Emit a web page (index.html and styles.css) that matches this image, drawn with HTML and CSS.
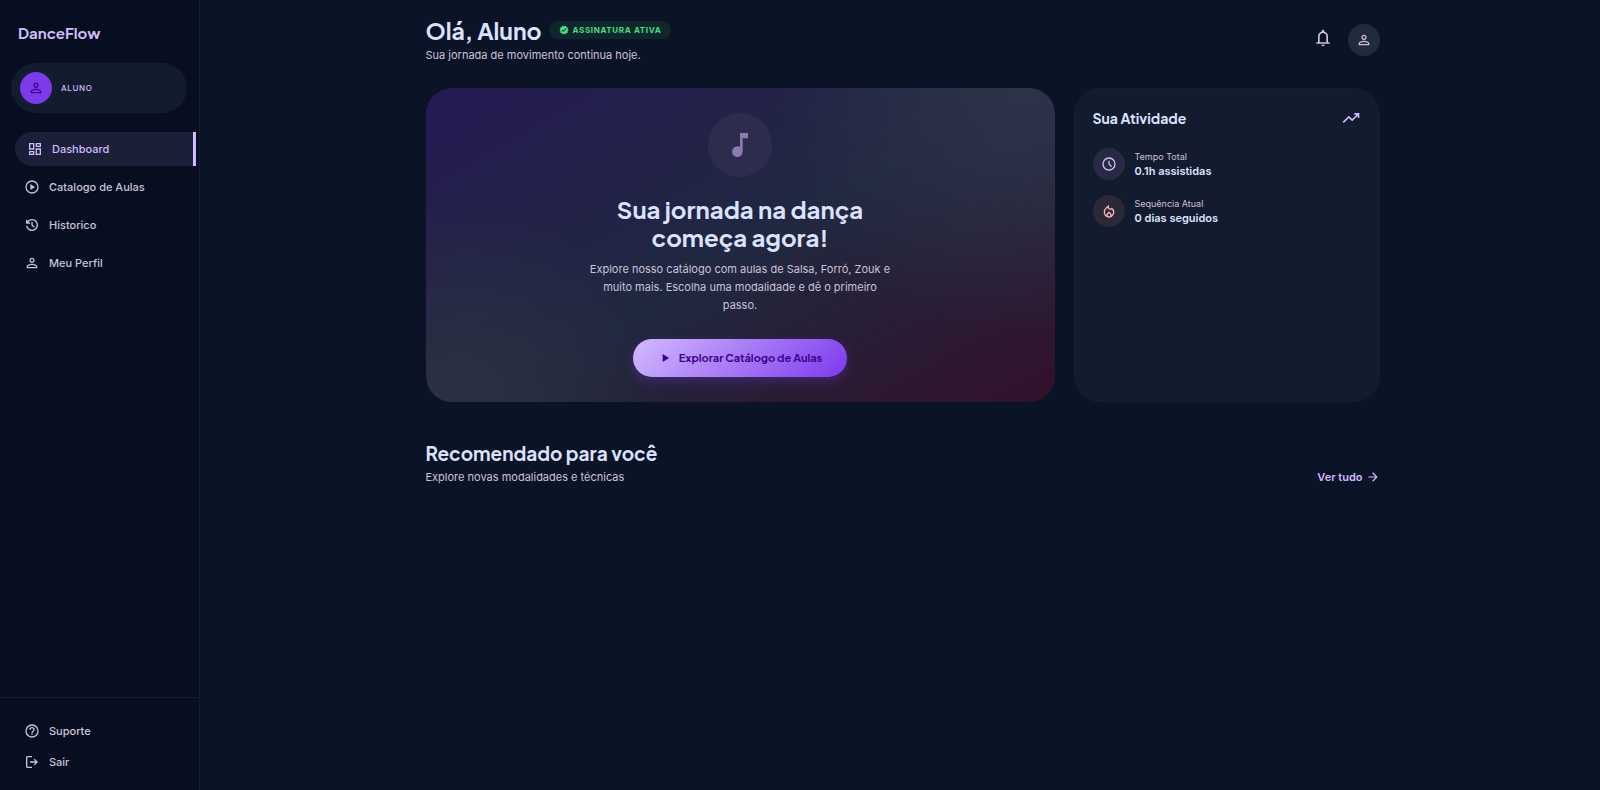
FILE: index.html
```html
<!DOCTYPE html>
<html lang="pt-BR">
<head>
  <meta charset="UTF-8">
  <meta name="viewport" content="width=device-width, initial-scale=1.0">
  <title>DanceFlow - Dashboard</title>
  <link rel="stylesheet" href="styles.css">
</head>
<body>
  <!-- Icons -->
  <svg class="sprite" aria-hidden="true">
    <symbol id="i-person" viewBox="0 0 24 24"><path d="M12 6a2 2 0 1 1 0 4 2 2 0 0 1 0-4m0 9c2.7 0 5.8 1.29 6 2v1H6v-.99c.2-.72 3.3-2.01 6-2.01M12 4C9.79 4 8 5.79 8 8s1.79 4 4 4 4-1.79 4-4-1.79-4-4-4m0 9c-2.67 0-8 1.34-8 4v3h16v-3c0-2.66-5.33-4-8-4"/></symbol>
    <symbol id="i-dashboard" viewBox="0 0 24 24"><path d="M19 5v2h-4V5h4M9 5v6H5V5h4m10 8v6h-4v-6h4M9 17v2H5v-2h4M21 3h-8v6h8V3M11 3H3v10h8V3m10 8h-8v10h8V11m-10 4H3v6h8v-6"/></symbol>
    <symbol id="i-play-circle" viewBox="0 0 24 24"><path d="M12 2a10 10 0 1 0 0 20 10 10 0 0 0 0-20m0 18a8 8 0 1 1 0-16 8 8 0 0 1 0 16M9.5 16.5l7-4.500-7-4.500z"/></symbol>
    <symbol id="i-history" viewBox="0 0 24 24"><path d="M12 21q-3.450 0-6.010-2.290T3.050 13H5.100q.350 2.600 2.310 4.300T12 19q2.930 0 4.960-2.040T19 12t-2.040-4.960T12 5q-1.730 0-3.230.800T6.250 8H9v2H3V4h2v2.350q1.280-1.600 3.110-2.470T12 3q1.880 0 3.510.710t2.850 1.930 1.930 2.850T21 12t-.710 3.510-1.930 2.850-2.850 1.930T12 21m2.800-4.800L11 12.400V7h2v4.600l3.200 3.200z"/></symbol>
    <symbol id="i-help" viewBox="0 0 24 24"><path d="M11 18h2v-2h-2zm1-16a10 10 0 1 0 0 20 10 10 0 0 0 0-20m0 18a8 8 0 1 1 0-16 8 8 0 0 1 0 16m0-14a4 4 0 0 0-4 4h2a2 2 0 1 1 4 0c0 2-3 1.750-3 5h2c0-2.250 3-2.500 3-5a4 4 0 0 0-4-4"/></symbol>
    <symbol id="i-logout" viewBox="0 0 24 24"><path d="M5 21q-.830 0-1.410-.590T3 19V5q0-.830.590-1.410T5 3h7v2H5v14h7v2zm11-4-1.380-1.450L17.180 13H9v-2h8.180l-2.550-2.550L16 7l5 5z"/></symbol>
    <symbol id="i-verified" viewBox="0 0 24 24"><path d="M23 12l-2.440-2.790.340-3.690-3.610-.820-1.890-3.200L12 2.960 8.600 1.500 6.710 4.690 3.100 5.500l.340 3.700L1 12l2.440 2.790-.340 3.700 3.610.820L8.600 22.500l3.400-1.470 3.400 1.460 1.890-3.190 3.610-.820-.340-3.690zm-12.910 4.720-3.800-3.810 1.480-1.480 2.320 2.330 5.850-5.870 1.480 1.480z"/></symbol>
    <symbol id="i-bell" viewBox="0 0 24 24"><path d="M4 19v-2h2v-7q0-2.080 1.250-3.690T10.500 4.200v-.700q0-.630.440-1.060T12 2t1.060.440.440 1.060v.700q2 .500 3.250 2.110T18 10v7h2v2zm8 3q-.820 0-1.410-.590T10 20h4q0 .830-.590 1.410T12 22m-4-5h8v-7q0-1.650-1.170-2.830T12 6 9.180 7.170 8 10z"/></symbol>
    <symbol id="i-note" viewBox="0 0 24 24"><path d="M10 21q-1.650 0-2.820-1.170T6 17t1.180-2.830T10 13q.580 0 1.060.140t.940.410V3h6v4h-4v10q0 1.650-1.170 2.830T10 21"/></symbol>
    <symbol id="i-play" viewBox="0 0 24 24"><path d="M8 5v14l11-7z"/></symbol>
    <symbol id="i-trend" viewBox="0 0 24 24"><path d="M3.400 18 2 16.600l7.400-7.450 4 4L18.600 8H16V6h6v6h-2V9.400L13.400 16l-4-4z"/></symbol>
    <symbol id="i-clock" viewBox="0 0 24 24"><path d="M15.300 16.700l1.400-1.400-3.700-3.700V7h-2v5.400zM12 22a10 10 0 1 1 0-20 10 10 0 0 1 0 20m0-2a8 8 0 1 0 0-16 8 8 0 0 0 0 16"/></symbol>
    <symbol id="i-fire" viewBox="0 -960 960 960"><path d="M240-400q0 52 21 98.500t60 81.500q-1-5-1-9v-9q0-32 12-60t35-51l113-111 113 111q23 23 35 51t12 60v9q0 4-1 9 39-35 60-81.500t21-98.500q0-50-18.500-94.500T648-574q-20 13-42 19.500t-45 6.500q-62 0-107.500-41T401-690q-39 33-69 68.500t-50.500 72Q261-513 250.500-475T240-400Zm240 52-57 56q-11 11-17 25t-6 29q0 32 23.500 55t56.500 23q33 0 56.500-23t23.500-55q0-16-6-29.500T537-292l-57-56Zm0-492v132q0 34 23.500 57t57.500 23q18 0 33.500-7.500T622-658l18-22q74 42 117 117t43 163q0 134-93 227T480-80q-134 0-227-93t-93-227q0-129 86.500-245T480-840Z"/></symbol>
    <symbol id="i-arrow" viewBox="0 0 24 24"><path d="M16.180 13H4v-2h12.180l-5.600-5.600L12 4l8 8-8 8-1.420-1.400z"/></symbol>
  </svg>

  <aside class="sidebar">
    <div class="logo">DanceFlow</div>

    <div class="profile">
      <div class="profile-avatar"><svg class="icon"><use href="#i-person"/></svg></div>
      <span class="profile-role">Aluno</span>
    </div>

    <nav class="nav">
      <a href="#" class="nav-link active"><svg class="icon"><use href="#i-dashboard"/></svg>Dashboard</a>
      <a href="#" class="nav-link"><svg class="icon"><use href="#i-play-circle"/></svg>Catalogo de Aulas</a>
      <a href="#" class="nav-link"><svg class="icon"><use href="#i-history"/></svg>Historico</a>
      <a href="#" class="nav-link"><svg class="icon"><use href="#i-person"/></svg>Meu Perfil</a>
    </nav>

    <div class="sidebar-footer">
      <a href="#" class="footer-link"><svg class="icon"><use href="#i-help"/></svg>Suporte</a>
      <a href="#" class="footer-link"><svg class="icon"><use href="#i-logout"/></svg>Sair</a>
    </div>
  </aside>

  <main class="main">
    <header class="header">
      <div>
        <div class="title-row">
          <h1>Olá, Aluno</h1>
          <span class="badge"><svg class="icon"><use href="#i-verified"/></svg>Assinatura ativa</span>
        </div>
        <p class="subtitle">Sua jornada de movimento continua hoje.</p>
      </div>
      <div class="header-actions">
        <button type="button" class="bell" aria-label="Notificações"><svg class="icon icon-lg"><use href="#i-bell"/></svg></button>
        <button type="button" class="avatar" aria-label="Meu perfil"><svg class="icon"><use href="#i-person"/></svg></button>
      </div>
    </header>

    <div class="grid">
      <section class="hero">
        <div class="hero-icon"><svg class="icon"><use href="#i-note"/></svg></div>
        <h2>Sua jornada na dança começa agora!</h2>
        <p>Explore nosso catálogo com aulas de Salsa, Forró, Zouk e muito mais. Escolha uma modalidade e dê o primeiro passo.</p>
        <button type="button" class="btn-primary"><svg class="icon"><use href="#i-play"/></svg>Explorar Catálogo de Aulas</button>
      </section>

      <section class="activity">
        <div class="activity-head">
          <h3>Sua Atividade</h3>
          <svg class="icon icon-lg"><use href="#i-trend"/></svg>
        </div>
        <div class="stat">
          <div class="stat-icon"><svg class="icon"><use href="#i-clock"/></svg></div>
          <div>
            <p class="stat-label">Tempo Total</p>
            <p class="stat-value">0.1h assistidas</p>
          </div>
        </div>
        <div class="stat">
          <div class="stat-icon stat-icon-fire"><svg class="icon"><use href="#i-fire"/></svg></div>
          <div>
            <p class="stat-label">Sequência Atual</p>
            <p class="stat-value">0 dias seguidos</p>
          </div>
        </div>
      </section>
    </div>

    <section class="recommended">
      <div>
        <h2>Recomendado para você</h2>
        <p class="subtitle">Explore novas modalidades e técnicas</p>
      </div>
      <a href="#" class="see-all">Ver tudo <svg class="icon"><use href="#i-arrow"/></svg></a>
    </section>
  </main>
</body>
</html>
```
FILE: styles.css
```css
:root {
  --bg: #0b1326;
  --sidebar: #060e20;
  --card: #131b2e;
  --text: #dae2fd;
  --muted: #ccc3d8;
  --primary: #d2bbff;
  --primary-strong: #7c3aed;
  --on-primary: #3f008e;
}

* {
  box-sizing: border-box;
}

body {
  margin: 0;
  min-height: 100vh;
  display: flex;
  gap: 5px;
  background: var(--bg);
  color: var(--text);
  font-family: Inter, sans-serif;
  font-size: 11px;
  line-height: 18px;
}

h1, h2, h3, p {
  margin: 0;
}

h1, h2, h3, .logo, .btn-primary {
  font-family: "Plus Jakarta Sans", Inter, sans-serif;
  font-weight: 700;
}

a {
  color: inherit;
  text-decoration: none;
}

button {
  border: none;
  padding: 0;
  background: none;
  color: inherit;
  cursor: pointer;
}

.sprite {
  position: absolute;
  width: 0;
  height: 0;
}

.icon {
  width: 16px;
  height: 16px;
  flex-shrink: 0;
  fill: currentColor;
}

.icon-lg {
  width: 20px;
  height: 20px;
}

/* Sidebar */
.sidebar {
  width: 200px;
  flex-shrink: 0;
  height: 100vh;
  position: sticky;
  top: 0;
  display: flex;
  flex-direction: column;
  padding-top: 20px;
  background: var(--sidebar);
  border-right: 1px solid #131b2e;
}

.logo {
  padding-left: 18px;
  font-size: 15px;
  line-height: 26px;
  color: var(--primary);
}

.profile {
  display: flex;
  align-items: center;
  gap: 9px;
  margin: 17px 12px 19px 11px;
  padding: 9px;
  border-radius: 25px;
  background: var(--card);
}

.profile-avatar {
  width: 32px;
  height: 32px;
  display: grid;
  place-items: center;
  border-radius: 50%;
  background: var(--primary-strong);
  color: var(--on-primary);
}

.profile-role {
  font-size: 8px;
  font-weight: 500;
  letter-spacing: 0.08em;
  text-transform: uppercase;
  color: var(--primary);
}

.nav {
  flex: 1;
  display: flex;
  flex-direction: column;
  gap: 4px;
  padding: 0 3px 0 12px;
}

.nav-link, .footer-link {
  display: flex;
  align-items: center;
  gap: 9px;
  padding: 8px 12px;
  font-weight: 500;
  color: var(--muted);
}

.nav-link.active {
  margin-left: 3px;
  border-right: 3px solid var(--primary);
  border-radius: 17px 0 0 17px;
  background: #1b1f38;
  color: var(--primary);
}

.sidebar-footer {
  display: flex;
  flex-direction: column;
  gap: 5px;
  padding: 20px 12px 15px;
  border-top: 1px solid #131b2e;
}

.footer-link {
  padding: 4px 12px;
}

/* Main */
.main {
  flex: 1;
  max-width: 954px;
  margin: 0 auto;
  padding: 16px 0 40px;
}

.header {
  display: flex;
  justify-content: space-between;
  align-items: center;
  margin-bottom: 24px;
}

.title-row {
  display: flex;
  align-items: center;
  gap: 7px;
}

.header h1 {
  font-size: 23px;
  line-height: 30px;
}

.badge {
  display: flex;
  align-items: center;
  gap: 4px;
  margin-bottom: 2px;
  padding: 0 10px;
  border-radius: 9px;
  background: #0f272c;
  color: #4ade80;
  font-size: 8px;
  font-weight: 700;
  letter-spacing: 0.08em;
  text-transform: uppercase;
}

.badge .icon {
  width: 10px;
  height: 10px;
}

.subtitle {
  color: var(--muted);
}

.header-actions {
  display: flex;
  align-items: center;
  gap: 15px;
  color: var(--muted);
}

.bell {
  display: flex;
  padding-bottom: 5px;
}

.avatar {
  width: 32px;
  height: 32px;
  display: grid;
  place-items: center;
  border-radius: 50%;
  background: #222a3d;
}

.grid {
  display: grid;
  grid-template-columns: 629fr 306fr;
  gap: 19px;
}

.hero {
  display: flex;
  flex-direction: column;
  align-items: center;
  padding: 25px 24px;
  border-radius: 26px;
  text-align: center;
  background:
    radial-gradient(circle at 95% 0, #2d3449 0, rgba(45, 52, 73, 0) 250px),
    radial-gradient(circle at 5% 100%, rgba(45, 50, 66, 0.9) 0, rgba(45, 50, 66, 0) 200px),
    linear-gradient(150deg, #251a54 0%, #20283f 52%, #33102a 100%);
}

.hero-icon {
  width: 64px;
  height: 64px;
  display: grid;
  place-items: center;
  margin-bottom: 18px;
  border-radius: 50%;
  background: #2e2c4d;
  color: #8c7cb2;
}

.hero-icon .icon {
  width: 32px;
  height: 32px;
}

.hero h2 {
  max-width: 300px;
  margin-bottom: 9px;
  font-size: 24px;
  line-height: 28px;
}

.hero p {
  max-width: 308px;
  margin-bottom: 25px;
  color: var(--muted);
}

.btn-primary {
  display: flex;
  align-items: center;
  gap: 7px;
  padding: 10px 25px;
  border-radius: 19px;
  background: linear-gradient(135deg, var(--primary), var(--primary-strong));
  box-shadow: 0 4px 12px rgba(124, 58, 237, 0.3);
  color: var(--on-primary);
  font-size: 11px;
  line-height: 18px;
}

.btn-primary .icon {
  width: 14px;
  height: 14px;
}

.activity {
  padding: 19px 18px;
  border: 1px solid #151d30;
  border-radius: 26px;
  background: var(--card);
}

.activity-head {
  display: flex;
  justify-content: space-between;
  align-items: center;
  margin-bottom: 20px;
  color: var(--primary);
}

.activity-head h3 {
  font-size: 14px;
  line-height: 20px;
  color: var(--text);
}

.stat {
  display: flex;
  align-items: center;
  gap: 10px;
  margin-bottom: 15px;
}

.stat-icon {
  width: 32px;
  height: 32px;
  display: grid;
  place-items: center;
  border-radius: 50%;
  background: #262b43;
  color: var(--primary);
}

.stat-icon-fire {
  background: #2b2838;
  color: #ffb2b7;
}

.stat-label {
  font-size: 9px;
  line-height: 14px;
  color: var(--muted);
}

.stat-value {
  font-weight: 600;
  line-height: 14px;
}

.recommended {
  display: flex;
  justify-content: space-between;
  align-items: flex-end;
  margin-top: 37px;
}

.recommended h2 {
  margin-bottom: 1px;
  font-size: 19px;
  line-height: 28px;
}

.see-all {
  display: flex;
  align-items: center;
  gap: 3px;
  font-weight: 600;
  color: var(--primary);
}

.see-all .icon {
  width: 14px;
  height: 14px;
}
```
